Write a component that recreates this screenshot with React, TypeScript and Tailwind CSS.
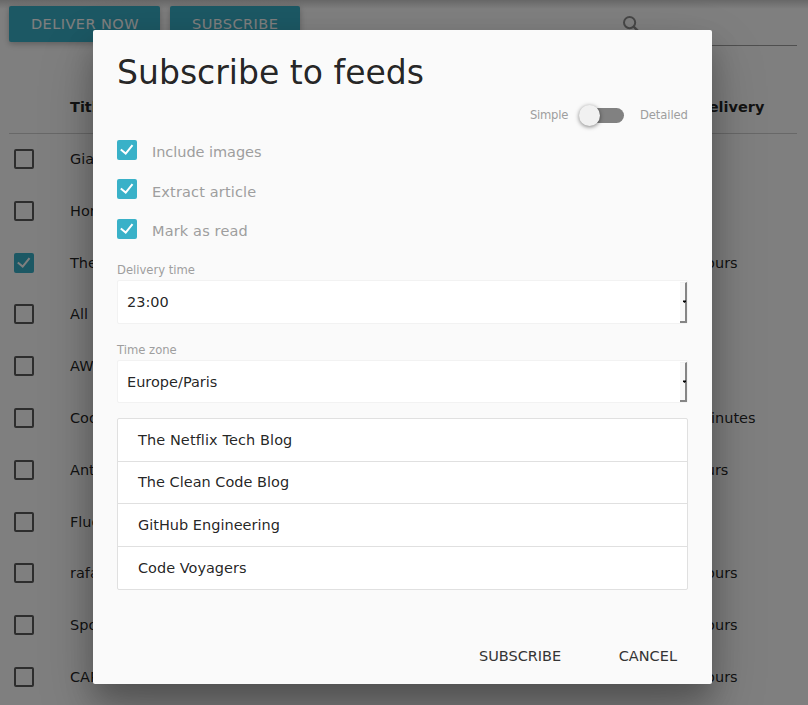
import React from "react";

const FEEDS = ["The Netflix Tech Blog", "The Clean Code Blog", "GitHub Engineering", "Code Voyagers"];

const ROWS: { title: string; next: string; checked?: boolean }[] = [
  { title: "Giant", next: "" },
  { title: "Home", next: "" },
  { title: "The Verge", next: "in 12 hours", checked: true },
  { title: "All news", next: "" },
  { title: "AWS", next: "" },
  { title: "Coding", next: "in 27 minutes" },
  { title: "Antirez", next: "in 8 hours" },
  { title: "Fluent", next: "" },
  { title: "rafal", next: "in 12 hours" },
  { title: "Spotify", next: "in 12 hours" },
  { title: "CAPTCHA", next: "in 12 hours" },
];

function Check({ checked = true }: { checked?: boolean }) {
  if (!checked) return <span className="block size-5 shrink-0 rounded-[2px] border-2 border-[#5a5a5a]" />;
  return (
    <span className="block size-5 shrink-0 rounded-[2px] bg-[#39b1c8]">
      <svg viewBox="0 0 20 20" className="block size-5" fill="none" stroke="#fff" strokeWidth="2">
        <path d="M3.8 9.5L8.7 13.6L15.5 5.2" />
      </svg>
    </span>
  );
}

function Select({ label, value, height }: { label: string; value: string; height: string }) {
  return (
    <div>
      <div className="h-[19px] text-[11.6px] leading-[18px] text-[#9e9e9e]">{label}</div>
      <div className={`${height} flex rounded-[2px] border border-[#f2f2f2] bg-white`}>
        <div className="flex flex-1 items-center pt-[2px] pl-[9px]">{value}</div>
        <div className="mt-px flex w-[7px] items-center justify-end border-r-2 border-b-2 border-t border-[#858585] border-t-[#f2f2f2] bg-[#f8f8f8]">
          <svg viewBox="0 0 4 4" className="-mr-px h-1 w-[3px] shrink-0">
            <path d="M0 0H4V2H3V3H1V2H0Z" fill="#000" />
          </svg>
        </div>
      </div>
    </div>
  );
}

export default function App() {
  return (
    <div className="relative h-[705px] w-[808px] overflow-hidden bg-white font-['DejaVu_Sans',sans-serif] text-[14.5px] leading-[21.75px] text-black/87">
      <div className="h-full bg-linear-to-b from-[#d0d0d0] to-white to-[9px]">
        <div className="flex h-[81px] items-start gap-[10px] pt-[6px] pl-[9px] pr-[11px]">
          <div className="h-9 w-[151px] rounded-[2px] bg-[#39b1c8] pl-[22px] leading-9 tracking-[0.45px] text-white shadow-[0_2px_5px_0_rgba(0,0,0,0.16),0_2px_10px_0_rgba(0,0,0,0.12)]">DELIVER NOW</div>
          <div className="h-9 w-[130px] rounded-[2px] bg-[#39b1c8] pl-[22px] leading-9 tracking-[0.45px] text-white shadow-[0_2px_5px_0_rgba(0,0,0,0.16),0_2px_10px_0_rgba(0,0,0,0.12)]">SUBSCRIBE</div>
          <div className="ml-auto h-10 w-[184px] border-b border-[#9e9e9e] pl-[10px] pt-[10px]">
            <svg viewBox="0 0 16 16" className="size-4" fill="none" stroke="#8f8f8f" strokeWidth="2">
              <circle cx="6.6" cy="6.6" r="5.6" />
              <path d="M10.6 10.6L15.4 15.4" strokeWidth="2.4" />
            </svg>
          </div>
        </div>
        <div className="mr-[11px] ml-[9px] flex h-[52.8px] items-center border-b border-[#d0d0d0] pt-px font-bold">
          <div className="ml-[61px] w-[585px]">Title</div>
          <div className="whitespace-nowrap">Next delivery</div>
        </div>
        <div className="-mt-[0.6px]">
          {ROWS.map((row) => (
            <div key={row.title} className="flex h-[51.8px] items-center pl-[14px]">
              <Check checked={!!row.checked} />
              <div className="ml-9 w-[586px] pt-[1.6px]">{row.title}</div>
              <div className="whitespace-nowrap pt-[1.6px]">{row.next}</div>
            </div>
          ))}
        </div>
      </div>

      <div className="absolute inset-0 bg-black/50" />

      <div className="absolute top-[30px] left-[93px] flex h-[654px] w-[619px] flex-col rounded-[2px] bg-[#fafafa] px-6 shadow-[0_16px_28px_0_rgba(0,0,0,0.22),0_25px_55px_0_rgba(0,0,0,0.21)]">
        <h4 className="pt-[25px] text-[33.06px] leading-[36px]">Subscribe to feeds</h4>
        <div className="mt-[13px] flex h-[22px] items-center justify-end text-[11.6px] text-[#9e9e9e]">
          <span className="w-[38px] whitespace-nowrap pt-px tracking-[-0.25px]">Simple</span>
          <span className="mr-4 ml-[18px] flex h-[15px] w-[38px] items-center rounded-r-[15px] bg-[#818181]">
            <span className="-ml-[7px] size-[21px] rounded-full bg-[#f1f1f1] shadow-[0_1px_4px_0_rgba(0,0,0,0.5)]" />
          </span>
          <span className="w-12 whitespace-nowrap pt-px tracking-[-0.1px]">Detailed</span>
        </div>
        <div className="mt-[14px] flex h-[118px] flex-col text-[#9e9e9e]">
          {["Include images", "Extract article", "Mark as read"].map((label) => (
            <div key={label} className="flex h-[39.4px] shrink-0 items-start">
              <Check />
              <span className={label === "Include images" ? "ml-[15px] pt-[2px] tracking-[-0.05px]" : "ml-[15px] pt-[2.3px] tracking-[0.15px]"}>{label}</span>
            </div>
          ))}
        </div>
        <div className="mt-[3px]">
          <Select label="Delivery time" value="23:00" height="h-[44px]" />
        </div>
        <div className="mt-[17px]">
          <Select label="Time zone" value="Europe/Paris" height="h-[43px]" />
        </div>
        <div className="mt-[15px] rounded-[2px] border border-[#e0e0e0] bg-white">
          {FEEDS.map((feed) => (
            <div key={feed} className="h-[42.7px] border-b border-[#e0e0e0] px-5 leading-[42px] last:h-[42px] last:border-b-0 nth-[2]:leading-[41px] nth-[1]:tracking-[0.09px]">
              {feed}
            </div>
          ))}
        </div>
        <div className="mt-[48px] flex justify-end pr-[11px] leading-9 text-[#343434]">
          <span className="mr-[57.5px]">SUBSCRIBE</span>
          <span>CANCEL</span>
        </div>
      </div>
    </div>
  );
}
